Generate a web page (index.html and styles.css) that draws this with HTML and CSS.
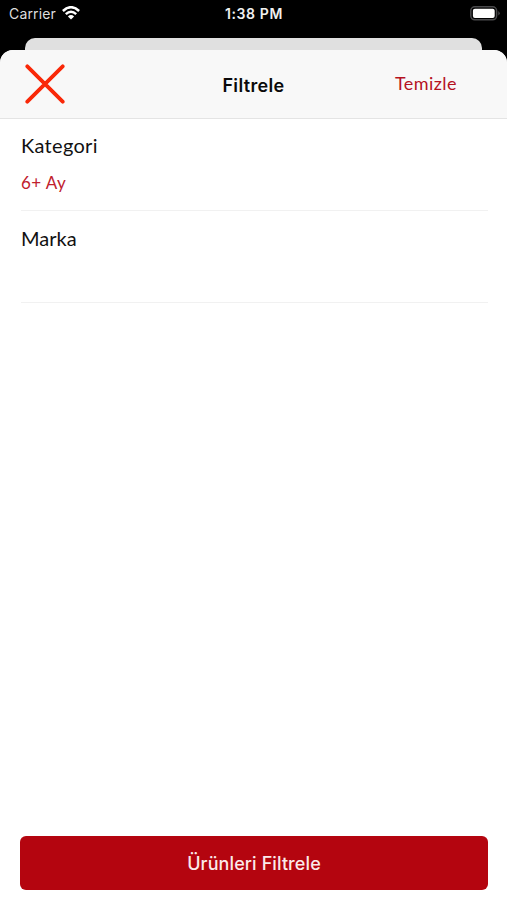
FILE: index.html
```
<!DOCTYPE html>
<html lang="tr">
<head>
  <meta charset="UTF-8">
  <title>Filtrele</title>
  <link rel="stylesheet" href="styles.css">
</head>
<body>

  <div class="status-bar">
    <div class="carrier">
      <span class="carrier-name">Carrier</span>
      <svg class="wifi" width="18" height="14" viewBox="0 0 18 14">
        <path d="M0.9 5 Q9 -2.6 17.1 5" fill="none" stroke="#fff" stroke-width="2.5"/>
        <path d="M3.8 8.2 Q9 3.2 14.2 8.2" fill="none" stroke="#fff" stroke-width="2.4"/>
        <path d="M5.9 10.5 Q9 7.7 12.1 10.5 L9 13.6 Z" fill="#fff"/>
      </svg>
    </div>
    <span class="time">1:38 PM</span>
    <svg class="battery" width="31" height="15" viewBox="0 0 31 15">
      <rect x="0.8" y="0.8" width="25.8" height="13" rx="4" fill="#000" stroke="#4a4a4c" stroke-width="1.5"/>
      <rect x="2.9" y="2.7" width="21.8" height="9.3" rx="2" fill="#fff"/>
      <path d="M28.3 5 Q31.2 7.3 28.3 9.6 Z" fill="#4a4a4c"/>
    </svg>
  </div>

  <div class="back-sheet"></div>

  <div class="sheet">
    <div class="header">
      <button class="close-btn">
        <svg width="40" height="40" viewBox="0 0 40 40">
          <path d="M2.3 2.3 L37.7 37.7 M37.7 2.3 L2.3 37.7" stroke="#f92808" stroke-width="3.8" stroke-linecap="round"/>
        </svg>
      </button>
      <h1>Filtrele</h1>
      <button class="clear-btn">Temizle</button>
    </div>

    <div class="filters">
      <div class="filter">
        <h2 class="category">Kategori</h2>
        <p>6+ Ay</p>
      </div>
      <div class="filter">
        <h2 class="brand">Marka</h2>
        <p></p>
      </div>
    </div>

    <button class="apply-btn">Ürünleri Filtrele</button>
  </div>

</body>
</html>
```
FILE: styles.css
```
* {
  box-sizing: border-box;
}

body {
  margin: 0;
  height: 900px;
  background: #000;
  font-family: Inter, sans-serif;
  display: flex;
  flex-direction: column;
  overflow: hidden;
}

button {
  border: none;
  background: none;
  padding: 0;
  cursor: pointer;
}

/* Status bar */
.status-bar {
  height: 38px;
  padding: 6px 6px 0 9px;
  color: #fff;
  display: grid;
  grid-template-columns: 1fr auto 1fr;
  align-items: start;
}

.carrier {
  display: flex;
  gap: 6px;
}

.carrier-name {
  color: #dedede;
  font-size: 14px;
  line-height: 16px;
  letter-spacing: 0.15px;
}

.time {
  margin-right: 2px;
  color: #f0f0f0;
  font-size: 14px;
  font-weight: 600;
  line-height: 16px;
  letter-spacing: 0.6px;
}

.battery {
  justify-self: end;
}

.back-sheet {
  height: 12px;
  margin: 0 25px;
  background: #e0e0e0;
  border-radius: 10px 10px 0 0;
}

/* Front sheet */
.sheet {
  flex: 1;
  background: #fff;
  border-radius: 13px 13px 0 0;
  overflow: hidden;
  display: flex;
  flex-direction: column;
}

.header {
  height: 69px;
  padding: 0 25px;
  background: #f8f8f8;
  border-bottom: 1px solid #e4e4e4;
  display: grid;
  grid-template-columns: 1fr auto 1fr;
  align-items: center;
}

.close-btn {
  justify-self: start;
  height: 40px;
}

.header h1 {
  margin: 2px 0 0;
  font-size: 18px;
  font-weight: 600;
  letter-spacing: 0.35px;
  color: #0a0a0a;
}

.clear-btn {
  justify-self: end;
  margin: 0 25px 2px 0;
  font-family: Lato, sans-serif;
  font-size: 18px;
  letter-spacing: 0.45px;
  color: #b5121f;
}

.filters {
  flex: 1;
  padding: 0 19px 0 21px;
}

.filter {
  height: 92px;
  padding-top: 13px;
  border-bottom: 1px solid #f1f1f1;
}

.filter h2 {
  margin: 0;
  font-family: Lato, sans-serif;
  font-size: 20px;
  font-weight: 400;
  line-height: 26px;
  color: #111;
}

.filter .category {
  letter-spacing: 0.3px;
}

.filter .brand {
  padding-top: 1px;
}

.filter p {
  margin: 13px 0 0;
  font-family: Lato, sans-serif;
  font-size: 17px;
  line-height: 24px;
  letter-spacing: 0.4px;
  color: #c0202d;
}

.apply-btn {
  height: 54px;
  margin: 0 19px 10px 20px;
  background: #b4050f;
  border-radius: 6px;
  font-family: Inter, sans-serif;
  font-size: 18px;
  font-weight: 500;
  letter-spacing: 0.1px;
  color: #fbe9ea;
}
```
